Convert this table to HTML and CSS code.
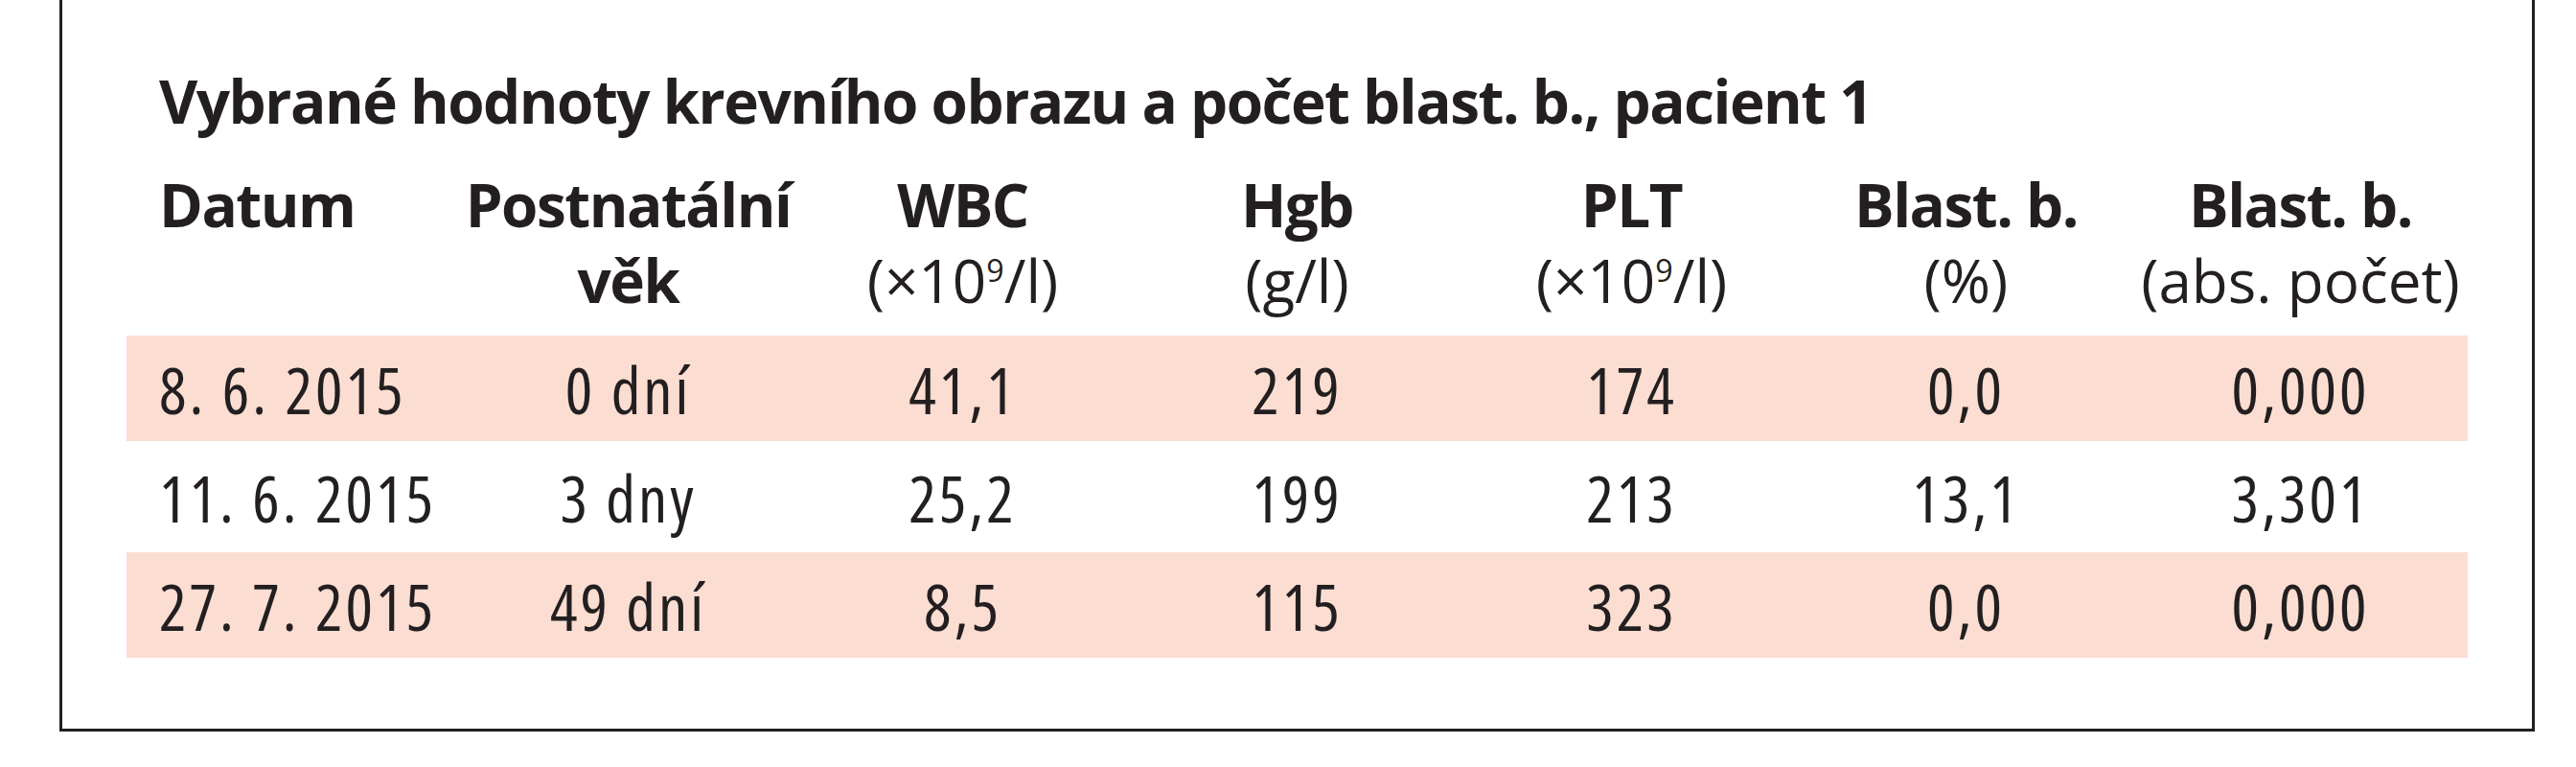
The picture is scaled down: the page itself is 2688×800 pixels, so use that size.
FILE: index.html
```html
<!DOCTYPE html>
<html lang="cs">
<head>
<meta charset="utf-8">
<title>Vybrané hodnoty krevního obrazu</title>
<link rel="stylesheet" href="styles.css">
</head>
<body>
<div class="frame">
  <h1 class="title">Vybrané hodnoty krevního obrazu a počet blast. b., pacient 1</h1>
  <table class="data">
    <colgroup>
      <col class="c"><col class="c"><col class="c"><col class="c"><col class="c"><col class="c"><col class="c">
    </colgroup>
    <thead>
      <tr>
        <th class="first"><div class="hl">Datum</div></th>
        <th><div class="hl">Postnatální</div><div class="hl">věk</div></th>
        <th><div class="hl">WBC</div><div class="unit">(×10<sup>9</sup>/l)</div></th>
        <th><div class="hl">Hgb</div><div class="unit">(g/l)</div></th>
        <th><div class="hl">PLT</div><div class="unit">(×10<sup>9</sup>/l)</div></th>
        <th><div class="hl">Blast. b.</div><div class="unit">(%)</div></th>
        <th><div class="hl">Blast. b.</div><div class="unit">(abs. počet)</div></th>
      </tr>
    </thead>
    <tbody>
      <tr class="band">
        <td class="first">8. 6. 2015</td><td>0 dní</td><td>41,1</td><td>219</td><td>174</td><td>0,0</td><td>0,000</td>
      </tr>
      <tr>
        <td class="first">11. 6. 2015</td><td>3 dny</td><td>25,2</td><td>199</td><td>213</td><td>13,1</td><td>3,301</td>
      </tr>
      <tr class="band">
        <td class="first">27. 7. 2015</td><td>49 dní</td><td>8,5</td><td>115</td><td>323</td><td>0,0</td><td>0,000</td>
      </tr>
    </tbody>
  </table>
</div>
</body>
</html>
```
FILE: styles.css
```css
* { box-sizing: border-box; }

body {
  margin: 0;
  background: #ffffff;
  color: #231f20;
  font-family: "Open Sans", "DejaVu Sans", sans-serif;
}

.frame {
  margin-left: 62px;
  width: 2583px;
  height: 763px;
  border: 3px solid #231f20;
  border-top: 0;
  padding: 65px 67px 0;
}

.title {
  margin: 0 0 26px 34px;
  font-size: 62px;
  font-weight: 700;
  line-height: 80px;
  letter-spacing: -1.5px;
  font-stretch: 100%;
}

.data {
  border-collapse: separate;
  border-spacing: 0 3px;
  table-layout: fixed;
  width: 2443px;
}

.data col.c { width: 349px; }

.data th {
  padding: 0 0 15px;
  vertical-align: top;
  text-align: center;
  font-weight: 400;
}

.hl {
  font-size: 62px;
  font-weight: 700;
  line-height: 79px;
  letter-spacing: -1.5px;
  font-stretch: 100%;
}

.unit {
  font-size: 62px;
  font-weight: 400;
  line-height: 79px;
  font-stretch: 100%;
}

.unit sup {
  font-size: 0.52em;
  line-height: 0;
  vertical-align: super;
}

.data td {
  height: 110px;
  padding: 3px 0 0;
  font-size: 67px;
  line-height: 107px;
  text-align: center;
  vertical-align: top;
  font-stretch: 75%;
  letter-spacing: 3px;
  word-spacing: 1px;
  white-space: nowrap;
}

.data .first {
  text-align: left;
  padding-left: 34px;
}

.band td { background: #fcddd2; }
```
